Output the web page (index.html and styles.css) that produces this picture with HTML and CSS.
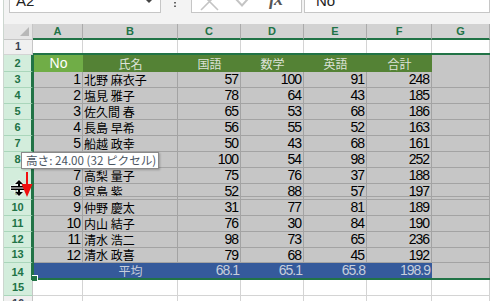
FILE: index.html
```html
<!DOCTYPE html>
<html lang="ja">
<head>
  <meta charset="UTF-8" />
  <title>成績表 - Excel</title>
  <link rel="stylesheet" href="styles.css">
</head>
<body>
  <div class="app">
    <div class="formula-bar">
      <div class="name-box">
        <span class="name-text">A2</span>
        <svg class="dd" width="6" height="4" viewBox="0 0 6 4"><path d="M0 0h6L3 3z" fill="#444"/></svg>
      </div>
      <svg class="grip" width="3" height="8" viewBox="0 0 3 8"><rect x="0" y="2" width="2" height="1.5" fill="#666"/><rect x="0" y="5.5" width="2" height="1.5" fill="#666"/></svg>
      <div class="fx-buttons">
        <svg class="btn-x" width="19" height="19" viewBox="0 0 19 19"><path d="M1 1L18 18M18 1L1 18" stroke="#c4c4c4" stroke-width="1.6" fill="none"/></svg>
        <svg class="btn-ok" width="22" height="19" viewBox="0 0 22 19"><path d="M1 10L8 17.5L21 3" stroke="#c4c4c4" stroke-width="2" fill="none"/></svg>
        <span class="fx">fx</span>
      </div>
      <div class="formula-input">No</div>
    </div>

    <div class="col-heads">
      <div class="corner"><svg width="9" height="9" viewBox="0 0 9 9"><path d="M9 0V9H0z" fill="#b8b8b8"/></svg></div>
      <div class="ch">A</div>
      <div class="ch">B</div>
      <div class="ch">C</div>
      <div class="ch">D</div>
      <div class="ch">E</div>
      <div class="ch">F</div>
      <div class="ch">G</div>
    </div>

    <div class="sheet-body">
      <div class="row-heads">
        <div class="rh h15">1</div>
        <div class="rh sel h17">2</div>
        <div class="rh sel">3</div>
        <div class="rh sel">4</div>
        <div class="rh sel">5</div>
        <div class="rh sel">6</div>
        <div class="rh sel">7</div>
        <div class="rh sel">8</div>
        <div class="rh sel h32">9</div>
        <div class="rh sel">10</div>
        <div class="rh sel">11</div>
        <div class="rh sel">12</div>
        <div class="rh sel h15">13</div>
        <div class="rh sel h17 last">14</div>
        <div class="rh sel2">15</div>
        <div class="rh">16</div>
      </div>

      <div class="cells">
        <div class="grid-row blank r13">
          <div class="c"></div><div class="c"></div><div class="c"></div><div class="c"></div><div class="c"></div><div class="c"></div><div class="c"></div>
        </div>

        <div class="selection">
          <div class="grid-row head">
            <div class="c active">No</div>
            <div class="c">氏名</div>
            <div class="c">国語</div>
            <div class="c">数学</div>
            <div class="c">英語</div>
            <div class="c">合計</div>
            <div class="c out"></div>
          </div>

          <div class="grid-row data">
            <div class="c num">1</div><div class="c name">北野 麻衣子</div><div class="c num">57</div><div class="c num">100</div><div class="c num">91</div><div class="c num">248</div><div class="c"></div>
          </div>
          <div class="grid-row data">
            <div class="c num">2</div><div class="c name">塩見 雅子</div><div class="c num">78</div><div class="c num">64</div><div class="c num">43</div><div class="c num">185</div><div class="c"></div>
          </div>
          <div class="grid-row data">
            <div class="c num">3</div><div class="c name">佐久間 春</div><div class="c num">65</div><div class="c num">53</div><div class="c num">68</div><div class="c num">186</div><div class="c"></div>
          </div>
          <div class="grid-row data">
            <div class="c num">4</div><div class="c name">長島 早希</div><div class="c num">56</div><div class="c num">55</div><div class="c num">52</div><div class="c num">163</div><div class="c"></div>
          </div>
          <div class="grid-row data">
            <div class="c num">5</div><div class="c name">船越 政幸</div><div class="c num">50</div><div class="c num">43</div><div class="c num">68</div><div class="c num">161</div><div class="c"></div>
          </div>
          <div class="grid-row data">
            <div class="c num">6</div><div class="c name">渡辺 明美</div><div class="c num">100</div><div class="c num">54</div><div class="c num">98</div><div class="c num">252</div><div class="c"></div>
          </div>
          <div class="grid-row data">
            <div class="c num">7</div><div class="c name">高梨 量子</div><div class="c num">75</div><div class="c num">76</div><div class="c num">37</div><div class="c num">188</div><div class="c"></div>
          </div>
          <div class="grid-row data clipped">
            <div class="c num">8</div><div class="c name">宮島 紫</div><div class="c num">52</div><div class="c num">88</div><div class="c num">57</div><div class="c num">197</div><div class="c"></div>
          </div>
          <div class="grid-row data gap">
            <div class="c"></div><div class="c"></div><div class="c"></div><div class="c"></div><div class="c"></div><div class="c"></div><div class="c"></div>
          </div>
          <div class="grid-row data">
            <div class="c num">9</div><div class="c name">仲野 慶太</div><div class="c num">31</div><div class="c num">77</div><div class="c num">81</div><div class="c num">189</div><div class="c"></div>
          </div>
          <div class="grid-row data">
            <div class="c num">10</div><div class="c name">内山 結子</div><div class="c num">76</div><div class="c num">30</div><div class="c num">84</div><div class="c num">190</div><div class="c"></div>
          </div>
          <div class="grid-row data">
            <div class="c num">11</div><div class="c name">清水 浩二</div><div class="c num">98</div><div class="c num">73</div><div class="c num">65</div><div class="c num">236</div><div class="c"></div>
          </div>
          <div class="grid-row data short">
            <div class="c num">12</div><div class="c name">清水 政喜</div><div class="c num">79</div><div class="c num">68</div><div class="c num">45</div><div class="c num">192</div><div class="c"></div>
          </div>
          <div class="grid-row avg">
            <div class="c"></div>
            <div class="c label">平均</div>
            <div class="c num">68.1</div>
            <div class="c num">65.1</div>
            <div class="c num">65.8</div>
            <div class="c num">198.9</div>
            <div class="c out"></div>
          </div>
        </div>

        <div class="grid-row blank">
          <div class="c"></div><div class="c"></div><div class="c"></div><div class="c"></div><div class="c"></div><div class="c"></div><div class="c"></div>
        </div>
        <div class="grid-row blank">
          <div class="c"></div><div class="c"></div><div class="c"></div><div class="c"></div><div class="c"></div><div class="c"></div><div class="c"></div>
        </div>
      </div>
    </div>
  </div>

  <!-- overlays: fill handle, row height tooltip, resize cursor, red marker -->
  <div class="fill-handle"></div>
  <div class="tooltip">高さ: 24.00 (32 ピクセル)</div>
  <svg class="cursor" width="20" height="19" viewBox="0 0 20 19">
    <path d="M9 1L13 5H10V7H18V8.5H1V7H8V5H5Z M1 9.5H18V11H10V13H13L9 17L5 13H8V11H1Z" fill="#000" stroke="#fff" stroke-width="1.2" paint-order="stroke"/>
  </svg>
  <svg class="arrow" width="12" height="26" viewBox="0 0 12 26">
    <path d="M5 0H7V12H11.5L6 25L0.5 12H5Z" fill="#f01010"/>
  </svg>
</body>
</html>
```

FILE: styles.css
```css
* {
  box-sizing: border-box;
}

html,
body {
  margin: 0;
  height: 100%;
  overflow: hidden;
}

body {
  position: relative;
  background: #fff;
  font-family: "Noto Sans CJK JP", sans-serif;
  color: #000;
}

.app {
  margin-left: 3px;
  border-left: 1px solid #ccd6cf;
  height: 100%;
}

/* formula bar */
.formula-bar {
  display: flex;
  align-items: flex-start;
  height: 24px;
  background: #f3f3f3;
}

.name-box {
  display: flex;
  margin: -6px 0 0 5px;
  width: 152px;
  height: 19px;
  background: #fff;
  border: 1px solid #c6c6c6;
}

.name-text {
  padding-left: 6px;
  font: 15px/12px "Liberation Sans", sans-serif;
  color: #222;
}

.dd {
  margin: 5px 8px 0 auto;
}

.grip {
  margin-left: 13px;
}

.fx-buttons {
  display: flex;
  align-items: flex-start;
  margin: -6px 0 0 14px;
  width: 111px;
  height: 19px;
  background: #fff;
  border: 1px solid #c6c6c6;
  border-top: none;
}

.btn-x {
  margin: -2px 0 0 8px;
}

.btn-ok {
  margin: -6px 0 0 15px;
}

.fx {
  margin: -4px 0 0 13px;
  font: italic bold 18px/18px "Liberation Serif", serif;
  color: #555;
  letter-spacing: -1px;
}

.formula-input {
  flex: 1;
  margin: -6px 0 0 2px;
  height: 19px;
  padding-left: 11px;
  background: #fff;
  border: 1px solid #c6c6c6;
  font: 15px/12px "Liberation Sans", sans-serif;
  color: #222;
}

/* column headings */
.col-heads {
  display: grid;
  grid-template-columns: 29px 50px 95px 63px 63px 63px 65px 1fr;
  height: 16px;
}

.corner {
  display: flex;
  align-items: flex-end;
  justify-content: flex-end;
  padding: 0 3px 3px 0;
  background: #e6e6e6;
  border-bottom: 1px solid #c6c6c6;
  border-right: 1px solid #c6c6c6;
}

.ch {
  background: #d2d2d2;
  border-right: 1px solid #ababab;
  border-bottom: 2px solid #217346;
  text-align: center;
  font: bold 11px/14px "Liberation Sans", sans-serif;
  color: #217346;
}

/* sheet */
.sheet-body {
  display: flex;
}

.row-heads {
  display: flex;
  flex-direction: column;
  width: 29px;
}

.rh {
  display: flex;
  align-items: flex-end;
  justify-content: center;
  height: 16px;
  padding-bottom: 2px;
  background: #f0f0f0;
  border-right: 1px solid #c6c6c6;
  border-bottom: 1px solid #d4d4d4;
  font: bold 11px/11px "Liberation Sans", sans-serif;
  color: #3a4150;
}

.rh.sel,
.rh.sel2 {
  background: #d3eddc;
  color: #217346;
  border-bottom-color: #aad6bb;
}

.rh.sel {
  border-right: 2px solid #217346;
}

.rh.h15 { height: 15px; }
.rh.h17 { height: 17px; }
.rh.h32 { height: 32px; }

.rh.last {
  border-bottom: none;
}

.cells {
  flex: 1;
}

.grid-row {
  display: grid;
  grid-template-columns: 50px 95px 63px 63px 63px 65px 1fr;
  height: 16px;
}

.selection {
  border-top: 2px solid #217346;
  border-bottom: 2px solid #217346;
  border-left: 1px solid #217346;
}

.selection .grid-row {
  grid-template-columns: 49px 95px 63px 63px 63px 65px 1fr;
}

.c {
  overflow: hidden;
  white-space: nowrap;
  padding: 0 3px;
  border-right: 1px solid #d4d4d4;
  border-bottom: 1px solid #d4d4d4;
  font-size: 12px;
  line-height: 15px;
}

.blank.r13 {
  height: 13px;
}

.blank.r13 .c {
  border-bottom: none;
}

.num {
  padding-right: 2px;
  text-align: right;
  font-family: "Liberation Sans", sans-serif;
  font-size: 14px;
  letter-spacing: -1px;
}

.name {
  padding-left: 1px;
}

/* header row of the table */
.head {
  height: 17px;
}

.head .c {
  border: none;
  background: #548235;
  color: #dde3d8;
  text-align: center;
  line-height: 17px;
}

.head .c.active {
  background: #70ad47;
  color: #fff;
  font: 14px/17px "Liberation Sans", sans-serif;
}

.head .c.out,
.avg .c.out {
  background: #c6c6c6;
  border-right: 1px solid #a3a3a3;
}

.data .c {
  background: #c6c6c6;
  border-color: #a3a3a3;
}

.data.clipped {
  height: 13px;
}

.data.gap {
  height: 3px;
}

.data.short {
  height: 15px;
}

.data.short .c {
  line-height: 14px;
}

.avg {
  height: 15px;
}

.avg .c {
  border: none;
  background: #355a9b;
  color: #c7cedc;
}

.avg .label {
  text-align: center;
}

/* overlays */
.fill-handle {
  position: absolute;
  left: 32px;
  top: 275px;
  width: 6px;
  height: 6px;
  background: #217346;
  border-right: 1px solid #fff;
  border-top: 1px solid #fff;
}

.tooltip {
  position: absolute;
  left: 21px;
  top: 152px;
  width: 138px;
  height: 17px;
  padding-left: 4px;
  background: #fff;
  border: 1px solid #8a8a8a;
  box-shadow: 1px 1px 2px rgba(0, 0, 0, 0.25);
  font-size: 11.6px;
  line-height: 15px;
  color: #4a5562;
  white-space: nowrap;
}

.cursor {
  position: absolute;
  left: 10px;
  top: 179px;
}

.arrow {
  position: absolute;
  left: 21px;
  top: 172px;
}
```
